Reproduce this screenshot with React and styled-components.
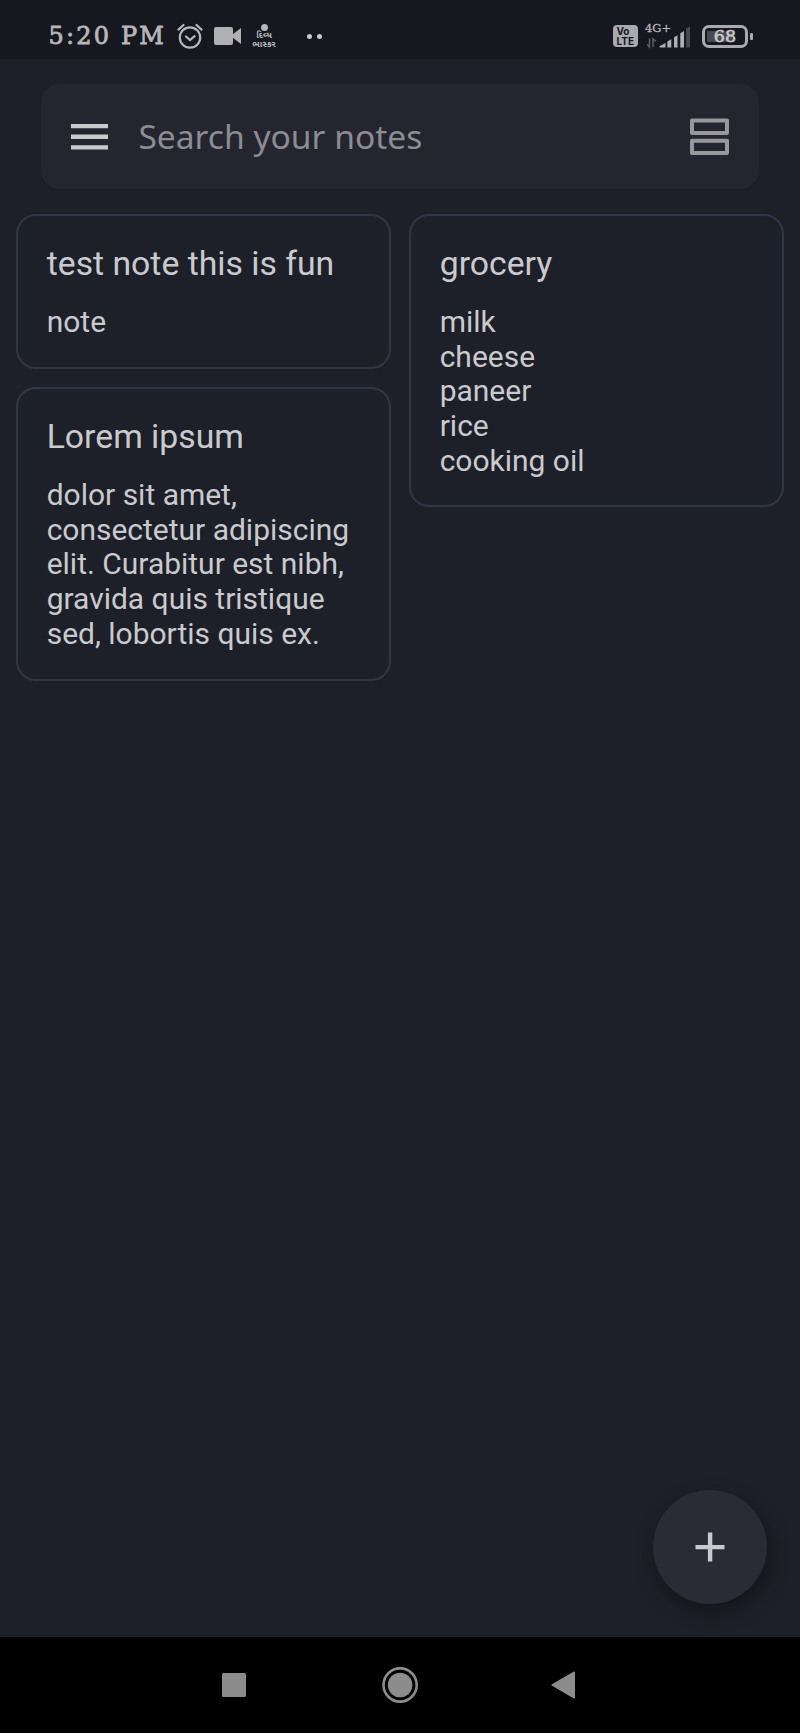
import React from "react";
import styled, { createGlobalStyle } from "styled-components";

const GlobalStyle = createGlobalStyle`
  * { box-sizing: border-box; }
  body { margin: 0; background: #1e2029; }
  svg { display: block; flex: none; }
`;

const Screen = styled.div`
  width: 800px;
  height: 1733px;
  display: flex;
  flex-direction: column;
  background: #1e2029;
  font-family: Roboto, sans-serif;
  overflow: hidden;
`;

const StatusBar = styled.header`
  flex: none;
  height: 59px;
  padding: 14px 47px 0 48.5px;
  display: flex;
  justify-content: space-between;
  background: #16171f;
  color: #b7b7bb;
`;

const StatusGroup = styled.div`
  height: 44px;
  display: flex;
  align-items: center;
`;

const Clock = styled.span`
  width: 128.5px;
  font: 24px/44px "DejaVu Serif", serif;
  letter-spacing: 2.2px;
  white-space: nowrap;
  -webkit-text-stroke: 0.8px currentColor;
`;

const NewsBadge = styled.div`
  width: 26px;
  margin: 0 0 0 10px;
  display: flex;
  flex-direction: column;
  align-items: center;
  font-family: "Noto Sans Gujarati", "Noto Sans", sans-serif;
  font-weight: 700;
`;

const NewsDot = styled.i`
  width: 7px;
  height: 7px;
  border-radius: 50%;
  background: currentColor;
`;

const NewsLine = styled.span`
  height: 8.5px;
  line-height: 10px;
  font-size: 8.6px;
  white-space: nowrap;
`;

const Dots = styled.div`
  margin-left: 30px;
  display: flex;
  gap: 5px;
`;

const Dot = styled.i`
  width: 5px;
  height: 5px;
  border-radius: 50%;
  background: #cacacd;
`;

const VolteBadge = styled.div`
  width: 25px;
  height: 22px;
  padding-left: 3.5px;
  display: flex;
  flex-direction: column;
  justify-content: center;
  gap: 1px;
  border-radius: 4px;
  background: #aaaaae;
  color: #16171f;
  font: 700 10px/9px Inter, sans-serif;
`;

const Signal = styled.div`
  width: 46px;
  height: 24px;
  margin: -1px 11px 0 7px;
  display: flex;
  flex-direction: column;
  font: 11.5px/9px "DejaVu Serif", serif;
  -webkit-text-stroke: 0.3px currentColor;
`;

const Battery = styled.div`
  width: 46px;
  height: 23px;
  border: 3px solid #aaaaae;
  border-radius: 7px;
  background: linear-gradient(90deg, transparent 2px, #4a4b52 2px, #4a4b52 27px, transparent 27px) 0 3px / 100% 11px no-repeat;
  color: #cacacd;
  text-align: center;
  font: 17.5px/16px "DejaVu Serif", serif;
  -webkit-text-stroke: 0.6px currentColor;
`;

const BatteryTip = styled.i`
  width: 3px;
  height: 7px;
  margin-left: 2px;
  border-radius: 1px;
  background: #aaaaae;
`;

const Main = styled.main`
  flex: 1;
  min-height: 0;
  padding: 25px 16px 33px;
  display: flex;
  flex-direction: column;
`;

const SearchBar = styled.div`
  flex: none;
  height: 105px;
  margin: 0 25px 25px;
  padding: 0 30px;
  display: flex;
  align-items: center;
  border-radius: 18px;
  background: #252530;
  box-shadow: 0 1px 1px rgba(12, 12, 20, 0.25);
`;

const Placeholder = styled.span`
  flex: 1;
  margin-left: 30.4px;
  padding-bottom: 1px;
  color: #8c8c93;
  font: 33.6px/44px "Noto Sans", sans-serif;
`;

const Board = styled.section`
  display: grid;
  grid-template-columns: 1fr 1fr;
  gap: 18px;
`;

const Column = styled.div`
  display: flex;
  flex-direction: column;
  gap: 18px;
`;

const Card = styled.article`
  height: ${(p) => p.$height}px;
  padding: 28px 26px 0 28.7px;
  border: 2px solid #323447;
  border-radius: 20px;
  color: #cacace;
`;

const Title = styled.h2`
  margin: 0 0 21px;
  font-size: 33.75px;
  font-weight: 400;
  line-height: 40px;
  white-space: nowrap;
`;

const Line = styled.p`
  margin: 0;
  font-size: 29.98px;
  line-height: 34.65px;
  white-space: nowrap;
`;

const AddButton = styled.button`
  flex: none;
  width: 114px;
  height: 114px;
  margin: auto 17px 0 auto;
  padding: 0;
  display: grid;
  place-items: center;
  border: 0;
  border-radius: 50%;
  background: #2b2b37;
  box-shadow: 3px 8px 18px rgba(16, 16, 22, 0.65);
`;

const NavBar = styled.nav`
  flex: none;
  height: 96px;
  padding: 0 221px 0 218px;
  display: flex;
  align-items: center;
  justify-content: space-between;
  background: #000;
`;

const NOTES = [
  [
    { title: "test note this is fun", height: 155, lines: ["note"] },
    {
      title: "Lorem ipsum",
      height: 293.5,
      lines: [
        "dolor sit amet,",
        "consectetur adipiscing",
        "elit. Curabitur est nibh,",
        "gravida quis tristique",
        "sed, lobortis quis ex.",
      ],
    },
  ],
  [{ title: "grocery", height: 293, lines: ["milk", "cheese", "paneer", "rice", "cooking oil"] }],
];

const AlarmIcon = () => (
  <svg width="26" height="26" viewBox="0 0 26 26" fill="none" stroke="#b7b7bb" strokeWidth="2.2" strokeLinecap="round">
    <circle cx="13" cy="14.5" r="10.2" />
    <path d="M1.5 6.6L6.5 2M24.5 6.6L19.5 2M9 13.5l4 3.5 4.6-3.8" />
  </svg>
);

const CameraSvg = styled.svg`
  margin-left: 11px;
`;

const CameraIcon = () => (
  <CameraSvg width="27" height="18" viewBox="0 0 27 18" fill="#b0b0b3">
    <rect width="19" height="18" rx="2" />
    <path d="M18.5 7.5L27 1v16l-8.5-6.5z" />
  </CameraSvg>
);

const SignalBars = () => (
  <svg width="46" height="15" viewBox="0 0 46 15" fill="#b0b0b3" overflow="visible">
    <path d="M4.5 5.5v8.5L2.3 11.5M8 14V5.8l2.8 2.5" fill="none" stroke="#5e5f66" strokeWidth="1.5" />
    <path d="M14.5 14.5v-1.2L20.5 10v4.5zM22.3 8.5l4-2.3v8.3h-4zM29 4.2l3.5-2v12.3H29zM35.3 0.2l3.7-2.2v16.5h-3.7z" />
    <path d="M41.2-4.5l3.8-2v21h-3.8z" fill="#4a4b52" />
  </svg>
);

const MenuIcon = () => (
  <svg width="37" height="26" viewBox="0 0 37 26" fill="#cacace">
    <path d="M0 0h37v4.3H0zM0 10.6h37v4.3H0zM0 21.2h37v4.3H0z" />
  </svg>
);

const AgendaIcon = () => (
  <svg width="39" height="38" viewBox="0 0 39 38" fill="none" stroke="#98989c" strokeWidth="4" strokeLinejoin="round">
    <path d="M2 2.5h35v12.4H2zM2 22.7h35v12.4H2z" />
  </svg>
);

const PlusIcon = () => (
  <svg width="30" height="30" viewBox="0 0 30 30" fill="#cacace">
    <path d="M12.9 0.5h4.4v12.4h12.2v4.3H17.3v12.3h-4.4V17.2H0.5v-4.3h12.4z" />
  </svg>
);

export default function App() {
  return (
    <Screen>
      <GlobalStyle />
      <StatusBar>
        <StatusGroup>
          <Clock>5:20 PM</Clock>
          <AlarmIcon />
          <CameraIcon />
          <NewsBadge>
            <NewsDot />
            <NewsLine>દિવ્ય</NewsLine>
            <NewsLine>ભાસ્કર</NewsLine>
          </NewsBadge>
          <Dots>
            <Dot />
            <Dot />
          </Dots>
        </StatusGroup>
        <StatusGroup>
          <VolteBadge>
            <span>Vo</span>
            <span>LTE</span>
          </VolteBadge>
          <Signal>
            4G+
            <SignalBars />
          </Signal>
          <Battery>68</Battery>
          <BatteryTip />
        </StatusGroup>
      </StatusBar>
      <Main>
        <SearchBar>
          <MenuIcon />
          <Placeholder>Search your notes</Placeholder>
          <AgendaIcon />
        </SearchBar>
        <Board>
          {NOTES.map((column, i) => (
            <Column key={i}>
              {column.map((note) => (
                <Card key={note.title} $height={note.height}>
                  <Title>{note.title}</Title>
                  {note.lines.map((line) => (
                    <Line key={line}>{line}</Line>
                  ))}
                </Card>
              ))}
            </Column>
          ))}
        </Board>
        <AddButton aria-label="Add note">
          <PlusIcon />
        </AddButton>
      </Main>
      <NavBar>
        <svg width="32" height="32" viewBox="0 0 32 32" fill="#8c8c8c">
          <rect x="4" y="4" width="24" height="24" rx="1.5" />
        </svg>
        <svg width="38" height="38" viewBox="0 0 38 38">
          <circle cx="20.1" cy="19" r="16.6" fill="none" stroke="#8c8c8c" strokeWidth="2.6" />
          <circle cx="20.1" cy="19" r="12.3" fill="#8c8c8c" />
        </svg>
        <svg width="32" height="32" viewBox="0 0 32 32" fill="#8c8c8c" stroke="#8c8c8c" strokeWidth="2" strokeLinejoin="round">
          <path d="M5.5 16L27 3.5v25z" />
        </svg>
      </NavBar>
    </Screen>
  );
}
